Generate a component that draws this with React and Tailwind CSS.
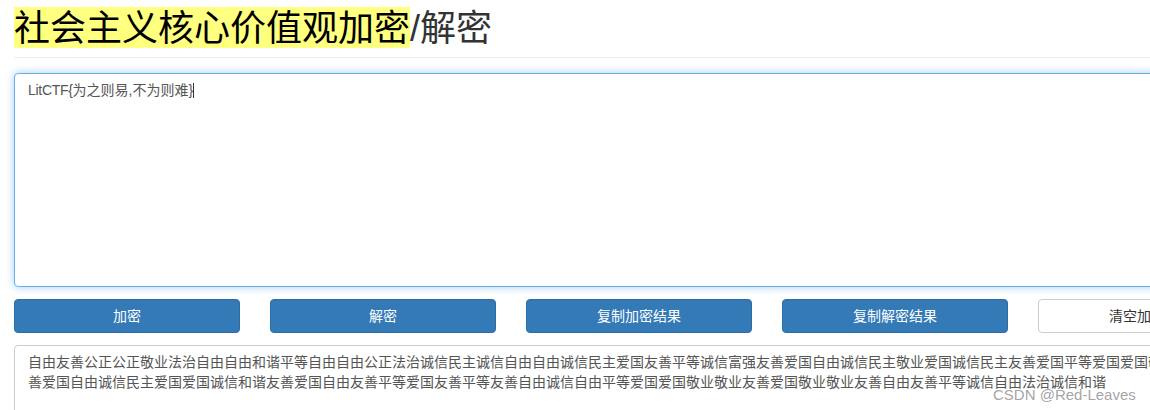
const FONT = "font-['Liberation_Sans','Noto_Sans_CJK_SC',sans-serif]";

const LINE_1 =
  "自由友善公正公正敬业法治自由自由和谐平等自由自由公正法治诚信民主诚信自由自由诚信民主爱国友善平等诚信富强友善爱国自由诚信民主敬业爱国诚信民主友善爱国平等爱国爱国敬业";
const LINE_2 =
  "善爱国自由诚信民主爱国爱国诚信和谐友善爱国自由友善平等爱国友善平等友善自由诚信自由平等爱国爱国敬业敬业友善爱国敬业敬业友善自由友善平等诚信自由法治诚信和谐";

function PrimaryButton({ children }) {
  return (
    <button className="w-[226px] h-[34px] shrink-0 rounded-[4px] border border-[#2e6da4] bg-[#337ab7] text-white text-sm">
      {children}
    </button>
  );
}

export default function App() {
  return (
    <div className={`relative w-[1150px] h-[410px] overflow-hidden bg-white text-[#333] ${FONT}`}>
      <div className="w-[1400px] pl-[14px] pt-[7px]">
        <div className="h-[51px] border-b border-[#eeeeee]">
          <h1 className="h-[41px] text-[36px] leading-[43px] font-normal whitespace-nowrap">
            <span className="inline-block h-[41px] bg-[#ffff80] text-black">社会主义核心价值观加密</span>
            <span>/解密</span>
          </h1>
        </div>

        <div className="w-[1250px] h-[214px] mt-[15px] px-[13px] py-[6px] rounded-[4px] border border-[#66afe9] bg-white text-sm leading-[20px] text-[#555] shadow-[0_0_8px_rgba(102,175,233,0.6)]">
          <span className="tracking-[-0.3px]">LitCTF{"{"}</span>
          <span>为之则易,不为则难{"}"}</span>
          <span className="inline-block w-px h-[15px] bg-[#333] align-[-3px]" />
        </div>

        <div className="flex gap-[30px] mt-[12px]">
          <PrimaryButton>加密</PrimaryButton>
          <PrimaryButton>解密</PrimaryButton>
          <PrimaryButton>复制加密结果</PrimaryButton>
          <PrimaryButton>复制解密结果</PrimaryButton>
          <button className="w-[226px] h-[34px] shrink-0 rounded-[4px] border border-[#cccccc] bg-white text-sm text-[#333]">
            清空加密结果
          </button>
        </div>

        <div className="w-[1250px] h-[120px] mt-[12px] px-[13px] py-[6px] rounded-[4px] border border-[#cccccc] bg-white text-sm leading-[20px] text-[#555] whitespace-nowrap overflow-hidden">
          <div>{LINE_1}</div>
          <div>{LINE_2}</div>
        </div>
      </div>

      <div className="absolute left-[993px] top-[386px] text-[15px] leading-[18px] text-[#8c8c8c]/80 whitespace-nowrap">
        CSDN @Red-Leaves
      </div>
    </div>
  );
}
